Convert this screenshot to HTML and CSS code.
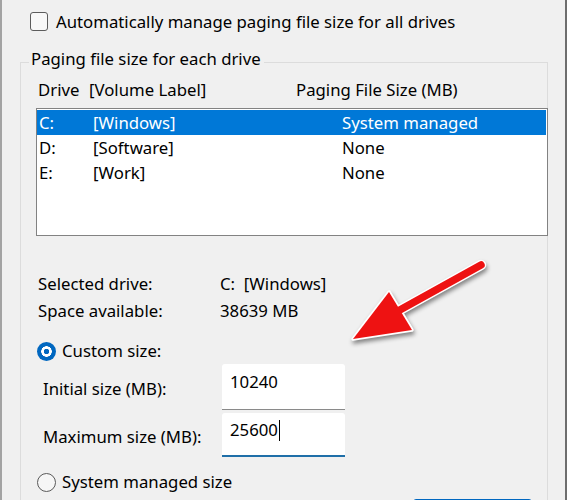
FILE: index.html
```html
<!DOCTYPE html>
<html lang="en">
<head>
<meta charset="utf-8">
<title>Virtual Memory</title>
<link rel="stylesheet" href="styles.css">
</head>
<body>
<div class="window">
  <label class="auto-row">
    <span class="checkbox"></span>
    <span>Automatically manage paging file size for all drives</span>
  </label>

  <fieldset class="group">
    <legend class="group-title">Paging file size for each drive</legend>

    <div class="list-head">
      <span>Drive</span>
      <span>[Volume Label]</span>
      <span>Paging File Size (MB)</span>
    </div>

    <div class="listbox">
      <div class="list-row selected"><span>C:</span><span>[Windows]</span><span>System managed</span></div>
      <div class="list-row"><span>D:</span><span>[Software]</span><span>None</span></div>
      <div class="list-row"><span>E:</span><span>[Work]</span><span>None</span></div>
    </div>

    <div class="info">
      <span>Selected drive:</span><span>C:&nbsp; [Windows]</span>
      <span>Space available:</span><span>38639 MB</span>
    </div>

    <label class="radio-row custom">
      <span class="radio checked"></span>
      <span>Custom size:</span>
    </label>

    <div class="sizes">
      <span class="size-label">Initial size (MB):</span>
      <div class="input">10240</div>
      <span class="size-label">Maximum size (MB):</span>
      <div class="input focused">25600<span class="caret"></span></div>
    </div>

    <label class="radio-row system">
      <span class="radio"></span>
      <span>System managed size</span>
    </label>

    <div class="button-row">
      <div class="button"></div>
    </div>
  </fieldset>

  <svg class="arrow" width="567" height="500" viewBox="0 0 567 500" aria-hidden="true">
    <g class="arrow-outline">
      <line x1="398" y1="311" x2="481" y2="265" stroke="#ffffff" stroke-width="10.5" stroke-linecap="round"/>
      <polygon points="353,339 389,292 412,330" fill="#ffffff" stroke="#ffffff" stroke-width="3.5" stroke-linejoin="round"/>
    </g>
    <g class="arrow-fill">
      <line x1="398" y1="311" x2="481" y2="265" stroke="#ee1212" stroke-width="7.5" stroke-linecap="round"/>
      <polygon points="353,339 389,292 412,330" fill="#ee1212"/>
    </g>
  </svg>
</div>
</body>
</html>
```

FILE: styles.css
```css
* { box-sizing: border-box; }

html, body {
  margin: 0;
  padding: 0;
  background: #f0f0f0;
}

body {
  font-family: "Noto Sans", "Open Sans", sans-serif;
  font-size: 16.75px;
  color: #000;
  line-height: 20px;
}

.window {
  position: relative;
  width: 567px;
  height: 500px;
  overflow: hidden;
  background: #f0f0f0;
  border-left: 2px solid #a3a3a3;
  border-right: 2px solid #6e6e6e;
}

.auto-row {
  display: flex;
  align-items: center;
  gap: 8px;
  height: 19px;
  margin: 12px 0 0 28px;
}

.auto-row span:last-child { padding-top: 1px; }

.checkbox {
  width: 18px;
  height: 19px;
  border: 1px solid #5c5c5c;
  border-radius: 3px;
  background: #f8f8f8;
  flex: none;
}

.group {
  margin: 18px 17px 0 18px;
  padding: 0 0 40px 0;
  border: 1px solid #dcdcdc;
  min-width: 0;
}

.group-title {
  margin-left: 8px;
  padding: 0 3px 6px 2px;
  line-height: 20px;
}

.list-head {
  display: grid;
  grid-template-columns: 51px 207px auto;
  margin: 5px 0 0 17px;
  height: 20px;
}

.listbox {
  margin: 8px -1px 0 15px;
  height: 128px;
  border: 1px solid #828282;
  background: #fff;
  padding: 1px 1px 0 0;
}

.list-row {
  display: grid;
  grid-template-columns: 54px 249px auto;
  height: 25px;
  align-items: center;
  padding-left: 2px;
}

.list-row.selected {
  background: #0078d7;
  color: #fff;
}

.info {
  display: grid;
  grid-template-columns: 182px auto;
  grid-auto-rows: 27px;
  align-items: center;
  margin: 34px 0 0 17px;
}

.radio-row {
  display: flex;
  align-items: center;
  gap: 6px;
  height: 20px;
  margin-left: 16px;
}

.radio-row.custom { margin-top: 17px; }
.radio-row.system { margin-top: 15px; }

.radio {
  width: 19px;
  height: 19px;
  border-radius: 50%;
  border: 1px solid #5a5a5a;
  background: #f6f6f6;
  flex: none;
}

.radio.checked {
  border: none;
  background: radial-gradient(circle, #0067c0 0 2.5px, #ffffff 3px 5px, #0067c0 5.5px);
}

.sizes {
  display: grid;
  grid-template-columns: 179px 123px;
  grid-template-rows: 46px 44px;
  row-gap: 3px;
  align-items: center;
  margin: 3px 0 0 22px;
}

.size-label { padding-top: 4px; }

.input {
  height: 100%;
  background: #fff;
  border-radius: 3px 3px 0 0;
  border-bottom: 1px solid #8a8a8a;
  padding: 8px 0 0 8px;
  line-height: 20px;
}

.input.focused {
  border-bottom: 2px solid #1f6fa8;
  padding-top: 7px;
}

.caret {
  display: inline-block;
  width: 1px;
  height: 21px;
  background: #000;
  vertical-align: -5px;
  margin-left: 1px;
}

.button-row {
  margin: 7px 0 0 392px;
}

.button {
  width: 119px;
  height: 30px;
  border: 1px solid #0067c0;
  border-radius: 3px;
  background: #fdfdfd;
}

.arrow {
  position: absolute;
  left: -2px;
  top: 0;
  pointer-events: none;
}

.arrow-outline {
  filter: drop-shadow(1px 3px 2px rgba(0, 0, 0, 0.45));
}
```
